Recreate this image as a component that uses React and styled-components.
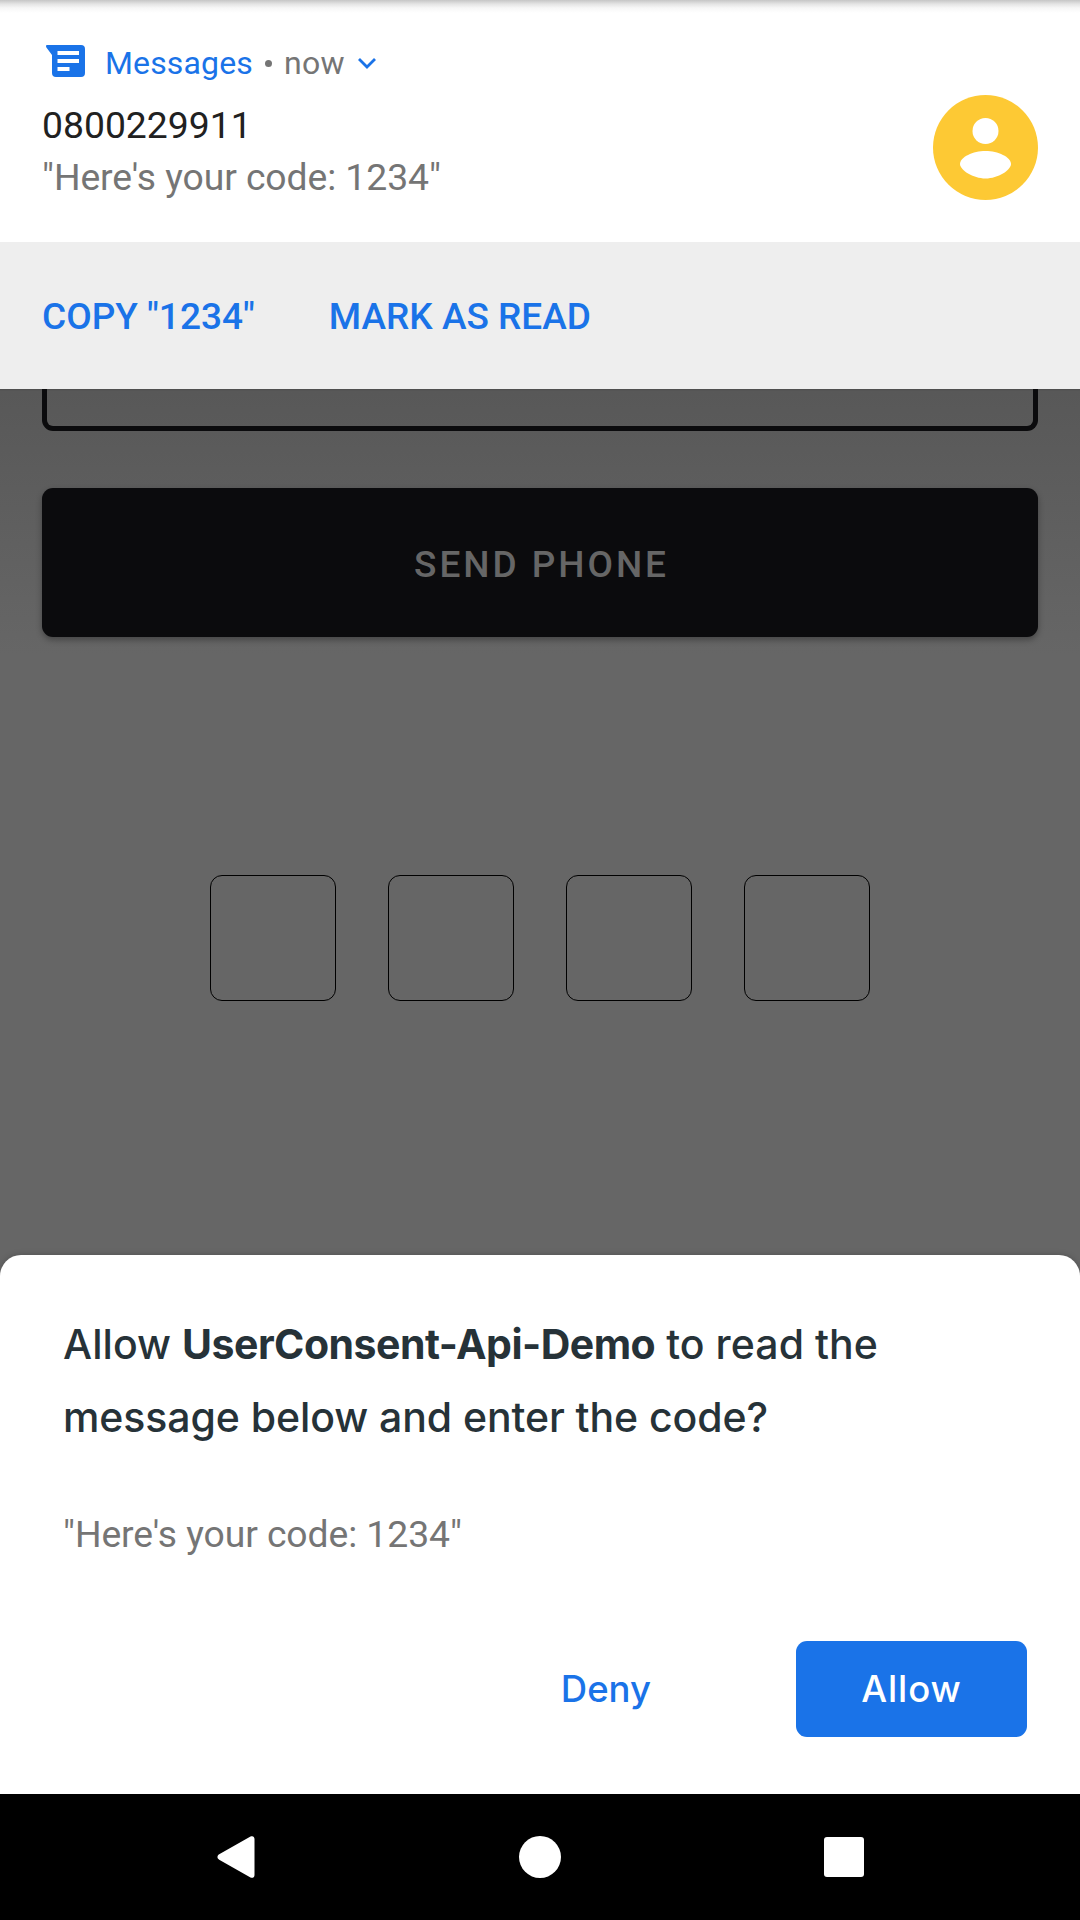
import React from "react";
import styled, { createGlobalStyle } from "styled-components";

const GlobalStyle = createGlobalStyle`
  * { box-sizing: border-box; }
  body { margin: 0; background: #000; }
  button { border: 0; padding: 0; background: none; font: inherit; white-space: nowrap; }
`;

const Screen = styled.div`
  display: flex;
  flex-direction: column;
  width: 1080px;
  height: 1920px;
  overflow: hidden;
  background: #666;
  font-family: Roboto, "Liberation Sans", sans-serif;
`;

const Notification = styled.section`
  flex: none;
  display: flex;
  justify-content: space-between;
  height: 242px;
  padding: 0 42px;
  background: linear-gradient(#c6c6c6 0, #e4e4e4 4px, #f7f7f7 8px, #fff 13px);
`;

const NotificationBody = styled.div`
  display: flex;
  flex-direction: column;
  padding-top: 43px;
`;

const SourceRow = styled.header`
  display: flex;
  align-items: center;
  height: 40px;
  margin-bottom: 17px;
  font-size: 32px;
  line-height: 40px;
`;

const MessagesIcon = styled.svg`
  width: 39px;
  height: 32px;
  margin: 0 20px 4px 4px;
`;

const AppName = styled.span`
  color: #1a73e8;
  letter-spacing: 0.15px;
`;

const Dot = styled.span`
  width: 7px;
  height: 7px;
  margin: 0 12px 0 12px;
  border-radius: 50%;
  background: #757575;
`;

const Time = styled.span`
  color: #757575;
  letter-spacing: 0.3px;
`;

const Chevron = styled.svg`
  width: 20px;
  height: 14px;
  margin-left: 12px;
`;

const Line = styled.p`
  margin: 0 0 2px;
  color: ${(p) => p.$color};
  font-size: 37.3px;
  line-height: 50px;
  letter-spacing: ${(p) => p.$spacing || "0"};
  white-space: nowrap;
`;

const Avatar = styled.svg`
  width: 105px;
  height: 105px;
  margin-top: 95px;
`;

const Actions = styled.div`
  flex: none;
  display: flex;
  align-items: center;
  gap: 74px;
  height: 147px;
  padding: 3px 42px 0;
  background: #eee;
`;

const ActionButton = styled.button`
  color: #1a73e8;
  font-size: 37px;
  font-weight: 500;
  line-height: 50px;
`;

const AppContent = styled.main`
  flex: 1;
  display: flex;
  flex-direction: column;
  padding: 0 42px;
  background: linear-gradient(#4c4c4c 0, #585858 2px, #5d5d5d 100px, #666 265px);
`;

const PhoneField = styled.div`
  height: 42px;
  border: 5px solid #0b0b0d;
  border-top: 0;
  border-radius: 0 0 11px 11px;
`;

const SendButton = styled.button`
  height: 149px;
  margin-top: 57px;
  padding: 3px 0 0 3px;
  border-radius: 11px;
  background: #0b0b0d;
  box-shadow: 0 3px 6px rgba(0, 0, 0, 0.32);
  color: #666;
  font-size: 37px;
  font-weight: 500;
  letter-spacing: 2.95px;
`;

const CodeRow = styled.div`
  display: flex;
  justify-content: center;
  gap: 52px;
  margin-top: 238px;
`;

const CodeBox = styled.div`
  width: 126px;
  height: 126px;
  border: 1px solid #000;
  border-radius: 12px;
`;

const SheetBackdrop = styled.div`
  flex: none;
  height: 539px;
  background: #666;
`;

const Sheet = styled.section`
  display: flex;
  flex-direction: column;
  height: 539px;
  padding: 53px 53px 57px 63px;
  border-radius: 21px 21px 0 0;
  background: #fff;
  box-shadow: 0 0 6px rgba(0, 0, 0, 0.22);
`;

const Title = styled.h1`
  margin: 0;
  color: #263238;
  font-family: Inter, Roboto, sans-serif;
  font-size: 41px;
  font-weight: 500;
  line-height: 73px;
`;

const TitleLine = styled.span`
  display: block;
  letter-spacing: ${(p) => p.$spacing};
  white-space: nowrap;
`;

const Strong = styled.strong`
  font-weight: 700;
  letter-spacing: -0.52px;
`;

const Quote = styled(Line)`
  margin: 55px 0 0;
`;

const SheetButtons = styled.div`
  display: flex;
  justify-content: flex-end;
  gap: 145px;
  margin-top: auto;
`;

const DialogButton = styled.button`
  width: ${(p) => (p.$primary ? "231px" : "auto")};
  height: 96px;
  border-radius: 11px;
  background: ${(p) => (p.$primary ? "#1a73e8" : "transparent")};
  color: ${(p) => (p.$primary ? "#fff" : "#1a73e8")};
  font-family: Inter, Roboto, sans-serif;
  font-size: 36.5px;
  font-weight: 500;
  letter-spacing: ${(p) => (p.$primary ? "0.9px" : "0")};
`;

const NavBar = styled.nav`
  flex: none;
  display: flex;
  align-items: center;
  justify-content: space-between;
  height: 126px;
  padding: 0 215px;
  background: #000;
`;

const NavIcon = styled.svg`
  width: 42px;
  height: 42px;
  overflow: visible;
  fill: #fff;
`;

export default function App() {
  return (
    <>
      <GlobalStyle />
      <Screen>
        <Notification>
          <NotificationBody>
            <SourceRow>
              <MessagesIcon viewBox="0 0 39 32">
                <path
                  fill="#1a73e8"
                  d="M1.2 0H35a4 4 0 0 1 4 4v24a4 4 0 0 1-4 4H10a4 4 0 0 1-4-4V10L.4 2.400C-.3 1.300 0 0 1.200 0Z"
                />
                <path fill="none" stroke="#fff" strokeWidth="4" d="M11.500 8H33M11.500 16H33M11.500 24H23.500" />
              </MessagesIcon>
              <AppName>Messages</AppName>
              <Dot />
              <Time>now</Time>
              <Chevron viewBox="0 0 20 14">
                <path fill="none" stroke="#1a73e8" strokeWidth="2.800" d="M2 3L10 11L18 3" />
              </Chevron>
            </SourceRow>
            <Line $color="#212121">0800229911</Line>
            <Line $color="#757575" $spacing="-0.07px">"Here's your code: 1234"</Line>
          </NotificationBody>
          <Avatar viewBox="0 0 105 105">
            <circle cx="52.500" cy="52.500" r="52.500" fill="#fdc934" />
            <circle cx="52.500" cy="36" r="13" fill="#fff" />
            <path
              fill="#fff"
              d="M52.500 56C65 56 78 62 78 69C78 75 65 83.500 52.500 83.500S27 75 27 69C27 62 40 56 52.500 56Z"
            />
          </Avatar>
        </Notification>
        <Actions>
          <ActionButton>COPY "1234"</ActionButton>
          <ActionButton>MARK AS READ</ActionButton>
        </Actions>
        <AppContent>
          <PhoneField />
          <SendButton>SEND PHONE</SendButton>
          <CodeRow>
            {[0, 1, 2, 3].map((i) => (
              <CodeBox key={i} />
            ))}
          </CodeRow>
        </AppContent>
        <SheetBackdrop>
          <Sheet>
            <Title>
              <TitleLine $spacing="0.06px">
                Allow <Strong>UserConsent-Api-Demo</Strong> to read the
              </TitleLine>
              <TitleLine $spacing="-0.08px">message below and enter the code?</TitleLine>
            </Title>
            <Quote $color="#757575" $spacing="-0.07px">"Here's your code: 1234"</Quote>
            <SheetButtons>
              <DialogButton>Deny</DialogButton>
              <DialogButton $primary>Allow</DialogButton>
            </SheetButtons>
          </Sheet>
        </SheetBackdrop>
        <NavBar>
          <NavIcon viewBox="0 0 42 42">
            <path d="M4.200 18.300L35.500 .6C37.500 -.5 39.500 .5 39.500 3V39C39.500 41.500 37.500 42.500 35.500 41.400L4.200 23.700C1.900 22.400 1.900 19.600 4.200 18.300Z" />
          </NavIcon>
          <NavIcon viewBox="0 0 42 42">
            <circle cx="21" cy="21" r="21" />
          </NavIcon>
          <NavIcon viewBox="0 0 42 42">
            <rect x="1" y="1" width="40" height="40" rx="3" />
          </NavIcon>
        </NavBar>
      </Screen>
    </>
  );
}
